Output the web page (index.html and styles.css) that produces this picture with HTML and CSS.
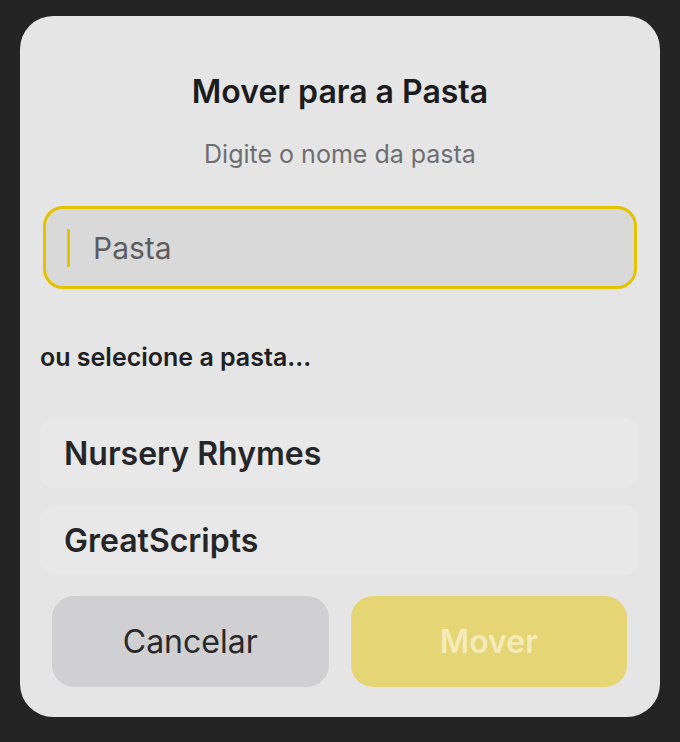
FILE: index.html
```html
<!DOCTYPE html>
<html lang="pt">
<head>
<meta charset="utf-8">
<title>Mover para a Pasta</title>
<link rel="stylesheet" href="styles.css">
</head>
<body>
<div class="dialog">
  <h1 class="title">Mover para a Pasta</h1>
  <p class="subtitle">Digite o nome da pasta</p>
  <div class="field">
    <span class="caret"></span>
    <span class="placeholder">Pasta</span>
  </div>
  <p class="section">ou selecione a pasta...</p>
  <ul class="folders">
    <li class="folder">Nursery Rhymes</li>
    <li class="folder">GreatScripts</li>
  </ul>
  <div class="actions">
    <button class="btn btn-cancel">Cancelar</button>
    <button class="btn btn-move">Mover</button>
  </div>
</div>
</body>
</html>
```
FILE: styles.css
```css
html, body {
  margin: 0;
  padding: 0;
  background: #242424;
  width: 680px;
  height: 742px;
  overflow: hidden;
}
body {
  font-family: Inter, "Noto Sans", "Liberation Sans", sans-serif;
}
.dialog {
  box-sizing: border-box;
  margin: 16px 0 0 20px;
  width: 640px;
  height: 701px;
  background: #e5e5e6;
  border-radius: 33px;
  padding: 57px 0 0 0;
  display: flex;
  flex-direction: column;
}
.title {
  margin: 0;
  text-align: center;
  font-size: 32px;
  line-height: 38px;
  font-weight: 600;
  color: #1c1c1e;
  letter-spacing: 0;
}
.subtitle {
  margin: 28px 0 0 0;
  text-align: center;
  font-size: 25px;
  line-height: 30px;
  font-weight: 400;
  color: #6e6e71;
}
.field {
  box-sizing: border-box;
  margin: 37px 23px 0 23px;
  height: 83px;
  flex-shrink: 0;
  border: 3px solid #e3c300;
  border-radius: 20px;
  background: #d9d9da;
  display: flex;
  align-items: center;
  padding-left: 21px;
  gap: 23px;
}
.caret {
  width: 3px;
  height: 38px;
  background: #e3c300;
  border-radius: 1px;
}
.placeholder {
  font-size: 30px;
  color: #5d5d60;
  font-weight: 400;
}
.section {
  margin: 53px 0 0 20px;
  font-size: 25px;
  line-height: 30px;
  font-weight: 600;
  color: #1f1f21;
}
.folders {
  list-style: none;
  margin: 46px 22px 0 20px;
  padding: 0;
  display: flex;
  flex-direction: column;
  gap: 17px;
}
.folder {
  height: 70px;
  display: flex;
  align-items: center;
  padding-left: 24px;
  background: #e8e8e9;
  border-radius: 14px;
  font-size: 32px;
  font-weight: 600;
  color: #262628;
}
.actions {
  margin: 21px 33px 0 32px;
  display: flex;
  gap: 22px;
}
.btn {
  flex: 1;
  height: 91px;
  border: none;
  border-radius: 22px;
  font-family: inherit;
  font-size: 32px;
}
.btn-cancel {
  background: #d0d0d2;
  color: #29292b;
  font-weight: 400;
}
.btn-move {
  background: #e5d574;
  color: #f3ebb8;
  font-weight: 600;
}
```
